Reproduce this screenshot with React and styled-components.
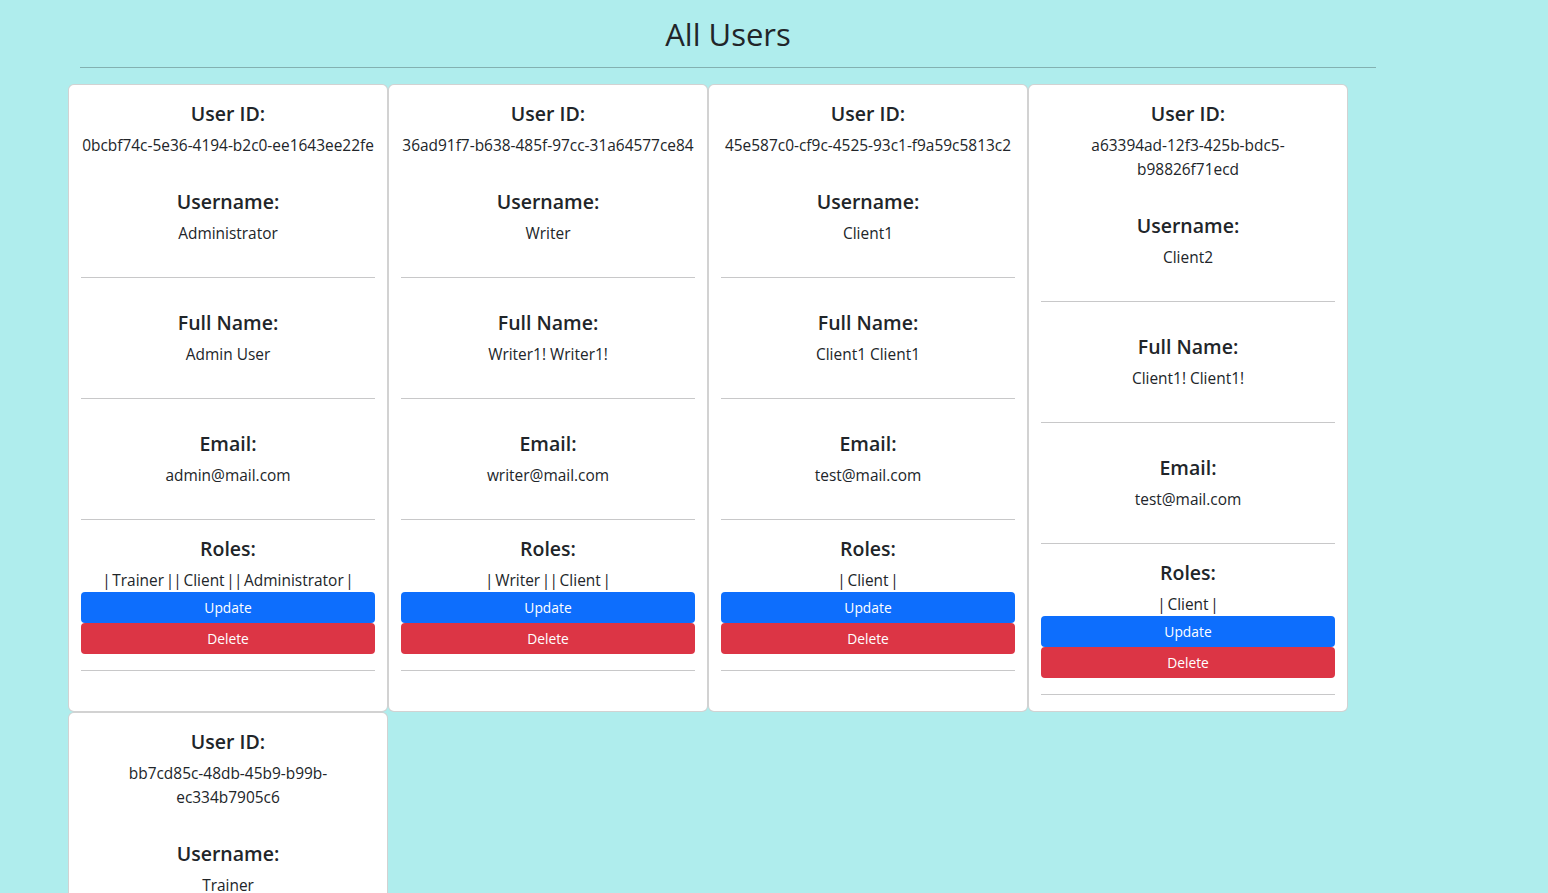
import React from 'react';
import styled, { createGlobalStyle } from 'styled-components';

const GlobalStyle = createGlobalStyle`
  * {
    box-sizing: border-box;
  }
  body {
    margin: 0;
    background-color: #afeded;
    color: #212529;
    font-family: "Open Sans", "Noto Sans", sans-serif;
    font-size: 15.45px;
    line-height: 24px;
  }
`;

const Page = styled.div`
  width: 1320px;
  margin-left: 68px;
  padding-top: 15px;
`;

const Title = styled.h2`
  margin: 0 12px;
  font-size: 31px;
  font-weight: 500;
  line-height: 38px;
  text-align: center;
`;

const TitleRule = styled.hr`
  margin: 14px 12px 16px;
  border: 0;
  border-top: 1px solid rgba(0, 0, 0, 0.25);
`;

const Grid = styled.div`
  display: flex;
  flex-wrap: wrap;
  align-items: stretch;
`;

const Card = styled.div`
  display: flex;
  flex-direction: column;
  width: 320px;
  background: #fff;
  border: 1px solid rgba(0, 0, 0, 0.175);
  border-radius: 6px;
  padding: 16px 12px 0;
  text-align: center;
`;

const Section = styled.div`
  display: flex;
  flex-direction: column;
  padding-top: ${(p) => p.$top || 0}px;
`;

const Label = styled.h5`
  margin: ${(p) => p.$top || 0}px 0 7px;
  padding-top: 1px;
  font-size: 19.5px;
  font-weight: 600;
  line-height: 24px;
`;

const Value = styled.p`
  margin: 0 0 ${(p) => (p.$flush ? 0 : 16)}px;
`;

const Pipe = styled.span`
  margin: 0 -2.4px;
`;

const Rule = styled.hr`
  width: 100%;
  margin: 16px 0;
  border: 0;
  border-top: 1px solid #c8c8c9;
`;

const Button = styled.button`
  display: block;
  width: 100%;
  height: 31px;
  border: 0;
  border-radius: 4px;
  background: ${(p) => (p.$danger ? '#dc3545' : '#0d6efd')};
  color: #fff;
  font-family: inherit;
  font-size: 13.8px;
  line-height: 21px;
  cursor: pointer;
`;

const users = [
  {
    id: '0bcbf74c-5e36-4194-b2c0-ee1643ee22fe',
    username: 'Administrator',
    fullName: 'Admin User',
    email: 'admin@mail.com',
    roles: ['Trainer', 'Client', 'Administrator'],
  },
  {
    id: '36ad91f7-b638-485f-97cc-31a64577ce84',
    username: 'Writer',
    fullName: 'Writer1! Writer1!',
    email: 'writer@mail.com',
    roles: ['Writer', 'Client'],
  },
  {
    id: '45e587c0-cf9c-4525-93c1-f9a59c5813c2',
    username: 'Client1',
    fullName: 'Client1 Client1',
    email: 'test@mail.com',
    roles: ['Client'],
  },
  {
    id: 'a63394ad-12f3-425b-bdc5-b98826f71ecd',
    username: 'Client2',
    fullName: 'Client1! Client1!',
    email: 'test@mail.com',
    roles: ['Client'],
  },
  {
    id: 'bb7cd85c-48db-45b9-b99b-ec334b7905c6',
    username: 'Trainer',
    fullName: 'Trainer1 Trainer1',
    email: 'trainer@mail.com',
    roles: ['Trainer'],
  },
];

function UserCard({ user }) {
  return (
    <Card>
      <Section>
        <Label>User ID:</Label>
        <Value>{user.id}</Value>
        <Label $top={16}>Username:</Label>
        <Value>{user.username}</Value>
      </Section>
      <Rule />
      <Section $top={16}>
        <Label>Full Name:</Label>
        <Value>{user.fullName}</Value>
      </Section>
      <Rule />
      <Section $top={16}>
        <Label>Email:</Label>
        <Value>{user.email}</Value>
      </Section>
      <Rule />
      <Section>
        <Label>Roles:</Label>
        <Value $flush>
          {user.roles.map((r, i) => (
            <React.Fragment key={r}>
              {i > 0 && ' '}
              <Pipe>|</Pipe> {r} <Pipe>|</Pipe>
            </React.Fragment>
          ))}
        </Value>
        <Button>Update</Button>
        <Button $danger>Delete</Button>
      </Section>
      <Rule />
    </Card>
  );
}

export default function App() {
  return (
    <Page>
      <GlobalStyle />
      <Title>All Users</Title>
      <TitleRule />
      <Grid>
        {users.map((u) => (
          <UserCard key={u.id} user={u} />
        ))}
      </Grid>
    </Page>
  );
}
